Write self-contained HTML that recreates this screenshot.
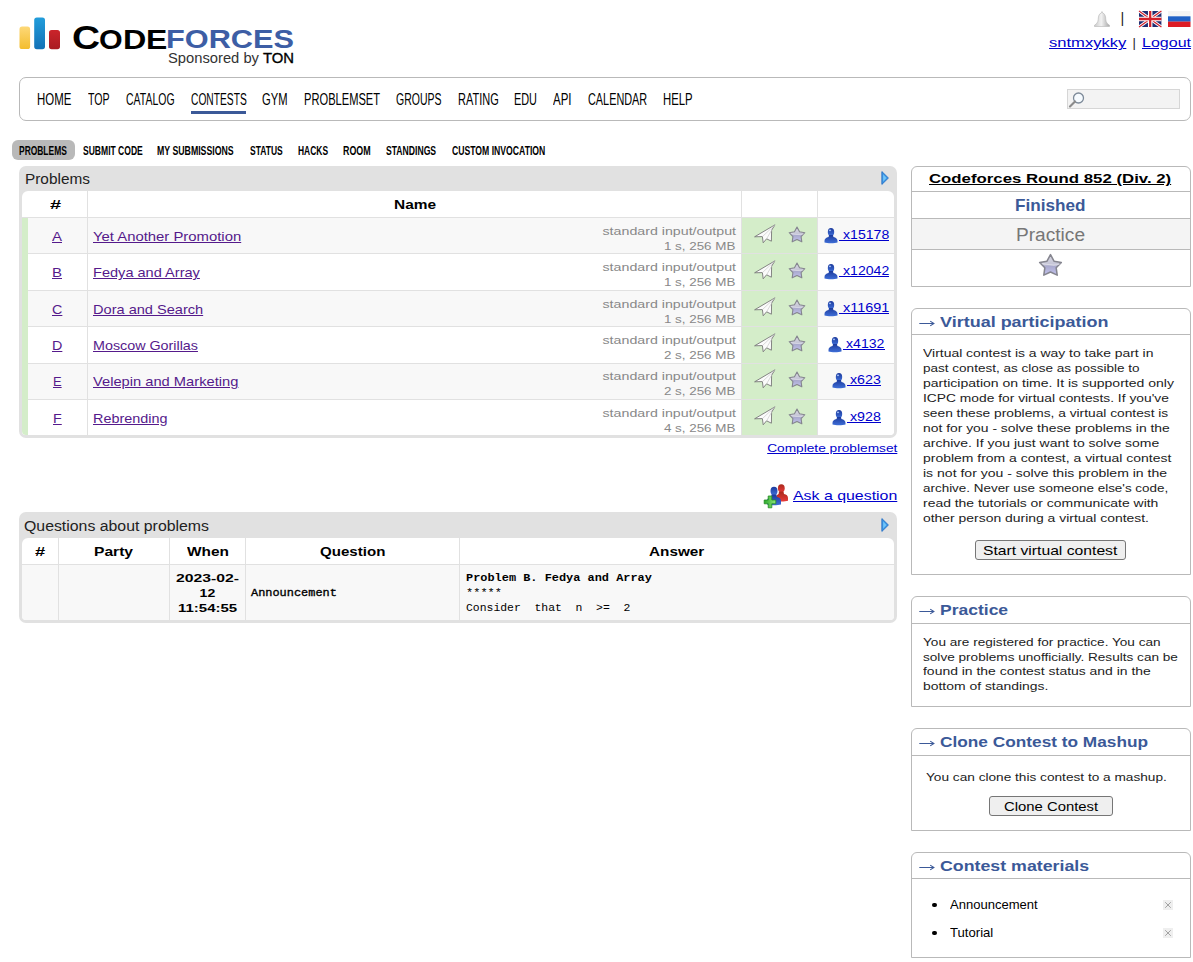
<!DOCTYPE html>
<html><head><meta charset="utf-8">
<style>
*{box-sizing:border-box}
html,body{margin:0;padding:0;background:#fff}
body{position:relative;width:1193px;height:962px;overflow:hidden;font-family:"Liberation Sans",sans-serif;color:#000}
.a{position:absolute;white-space:nowrap}
svg.a{overflow:visible}
</style></head><body>
<svg class="a" style="left:0;top:0" width="70" height="60">
<defs>
<linearGradient id="gy" x1="0" y1="0" x2="0" y2="1"><stop offset="0" stop-color="#fdd878"/><stop offset="1" stop-color="#f3bd2e"/></linearGradient>
<linearGradient id="gb" x1="0" y1="0" x2="0" y2="1"><stop offset="0" stop-color="#229ddb"/><stop offset="1" stop-color="#1371b6"/></linearGradient>
<linearGradient id="gr" x1="0" y1="0" x2="0" y2="1"><stop offset="0" stop-color="#cb242b"/><stop offset="1" stop-color="#a91b21"/></linearGradient>
</defs>
<rect x="19.5" y="26.5" width="10.6" height="22.6" rx="2.6" fill="url(#gy)"/>
<rect x="34.2" y="17.5" width="10.8" height="31.7" rx="2.6" fill="url(#gb)"/>
<rect x="49" y="30" width="11" height="19.2" rx="2.6" fill="url(#gr)"/>
</svg>
<div class="a" style="left:72.18px;top:21.27px;font-family:'Liberation Sans',sans-serif;font-size:32.99px;line-height:32.99px;font-weight:700;color:#000;transform-origin:0 0;transform:scaleX(1.1789);">C</div>
<div class="a" style="left:99.08px;top:25.57px;font-family:'Liberation Sans',sans-serif;font-size:27.91px;line-height:27.91px;font-weight:700;color:#000;transform-origin:0 0;transform:scaleX(1.0890);">O</div>
<div class="a" style="left:122.78px;top:25.57px;font-family:'Liberation Sans',sans-serif;font-size:27.91px;line-height:27.91px;font-weight:700;color:#000;transform-origin:0 0;transform:scaleX(1.1576);">D</div>
<div class="a" style="left:145.88px;top:25.57px;font-family:'Liberation Sans',sans-serif;font-size:27.91px;line-height:27.91px;font-weight:700;color:#000;transform-origin:0 0;transform:scaleX(1.1439);">E</div>
<div class="a" style="left:165.76px;top:27.48px;font-family:'Liberation Sans',sans-serif;font-size:25.9px;line-height:25.9px;font-weight:700;color:#3d5ea5;transform-origin:0 0;transform:scaleX(1.1856);">FORCES</div>
<div class="a" style="left:168.24px;top:51.15px;font-family:'Liberation Sans',sans-serif;font-size:14px;line-height:14px;font-weight:400;color:#333;transform-origin:0 0;transform:scaleX(1.0531);">Sponsored by</div>
<div class="a" style="left:262.72px;top:50.81px;font-family:'Liberation Sans',sans-serif;font-size:14.4px;line-height:14.4px;font-weight:400;color:#000;transform-origin:0 0;transform:scaleX(1.0316);-webkit-text-stroke:0.35px #000;">TON</div>
<svg class="a" style="left:1094px;top:11px" width="16" height="16" viewBox="0 0 16 16">
<defs><linearGradient id="bell" x1="0" y1="0" x2="1" y2="0"><stop offset="0" stop-color="#c9c9c9"/><stop offset="0.45" stop-color="#f2f2f2"/><stop offset="1" stop-color="#a9a9a9"/></linearGradient></defs>
<path d="M8 0.5 L8.6 2 C11 2.6 11.6 5 11.8 8.5 C12 11.5 13.5 13 15.5 14.2 L15.5 15.5 L0.5 15.5 L0.5 14.2 C2.5 13 4 11.5 4.2 8.5 C4.4 5 5 2.6 7.4 2 Z" fill="url(#bell)" stroke="#b5b5b5" stroke-width="0.6"/>
</svg>
<div class="a" style="left:1120.42px;top:11.31px;font-family:'Liberation Sans',sans-serif;font-size:14.4px;line-height:14.4px;font-weight:400;color:#222;">|</div>
<svg class="a" style="left:1138.8px;top:11px" width="22.4" height="16" viewBox="0 0 60 42" preserveAspectRatio="none">
<rect width="60" height="42" fill="#1f2d72"/>
<path d="M0 0 L60 42 M60 0 L0 42" stroke="#fff" stroke-width="8"/>
<path d="M0 0 L60 42 M60 0 L0 42" stroke="#d2202a" stroke-width="3"/>
<path d="M30 0 V42 M0 21 H60" stroke="#fff" stroke-width="12"/>
<path d="M30 0 V42 M0 21 H60" stroke="#d2202a" stroke-width="6"/>
</svg>
<svg class="a" style="left:1167.7px;top:11px" width="22.5" height="16" viewBox="0 0 23 16" preserveAspectRatio="none">
<rect width="23" height="5.4" fill="#f4f4f4"/><rect y="5.3" width="23" height="5.4" fill="#2161c5"/><rect y="10.6" width="23" height="5.4" fill="#dd1c24"/>
</svg>
<div class="a" style="left:1049.48px;top:36.30px;font-family:'Liberation Sans',sans-serif;font-size:13px;line-height:13px;font-weight:400;color:#0000cc;text-decoration:underline;transform-origin:0 0;transform:scaleX(1.2745);">sntmxykky</div>
<div class="a" style="left:1132.48px;top:36.30px;font-family:'Liberation Sans',sans-serif;font-size:13px;line-height:13px;font-weight:400;color:#222;">|</div>
<div class="a" style="left:1142.08px;top:36.30px;font-family:'Liberation Sans',sans-serif;font-size:13px;line-height:13px;font-weight:400;color:#0000cc;text-decoration:underline;transform-origin:0 0;transform:scaleX(1.2319);">Logout</div>
<div class="a" style="left:19px;top:77px;width:1172px;height:44px;border:1px solid #b9b9b9;border-radius:7px"></div>
<div class="a" style="left:36.77px;top:91.83px;font-family:'Liberation Sans',sans-serif;font-size:15.8px;line-height:15.8px;font-weight:400;color:#000;transform-origin:0 0;transform:scaleX(0.7246);">HOME</div>
<div class="a" style="left:87.57px;top:91.83px;font-family:'Liberation Sans',sans-serif;font-size:15.8px;line-height:15.8px;font-weight:400;color:#000;transform-origin:0 0;transform:scaleX(0.6729);">TOP</div>
<div class="a" style="left:126.07px;top:91.83px;font-family:'Liberation Sans',sans-serif;font-size:15.8px;line-height:15.8px;font-weight:400;color:#000;transform-origin:0 0;transform:scaleX(0.6636);">CATALOG</div>
<div class="a" style="left:190.77px;top:91.83px;font-family:'Liberation Sans',sans-serif;font-size:15.8px;line-height:15.8px;font-weight:400;color:#000;transform-origin:0 0;transform:scaleX(0.6477);">CONTESTS</div>
<div class="a" style="left:262.37px;top:91.83px;font-family:'Liberation Sans',sans-serif;font-size:15.8px;line-height:15.8px;font-weight:400;color:#000;transform-origin:0 0;transform:scaleX(0.7091);">GYM</div>
<div class="a" style="left:303.77px;top:91.83px;font-family:'Liberation Sans',sans-serif;font-size:15.8px;line-height:15.8px;font-weight:400;color:#000;transform-origin:0 0;transform:scaleX(0.7048);">PROBLEMSET</div>
<div class="a" style="left:395.77px;top:91.83px;font-family:'Liberation Sans',sans-serif;font-size:15.8px;line-height:15.8px;font-weight:400;color:#000;transform-origin:0 0;transform:scaleX(0.6637);">GROUPS</div>
<div class="a" style="left:457.57px;top:91.83px;font-family:'Liberation Sans',sans-serif;font-size:15.8px;line-height:15.8px;font-weight:400;color:#000;transform-origin:0 0;transform:scaleX(0.6955);">RATING</div>
<div class="a" style="left:513.77px;top:91.83px;font-family:'Liberation Sans',sans-serif;font-size:15.8px;line-height:15.8px;font-weight:400;color:#000;transform-origin:0 0;transform:scaleX(0.6891);">EDU</div>
<div class="a" style="left:553.47px;top:91.83px;font-family:'Liberation Sans',sans-serif;font-size:15.8px;line-height:15.8px;font-weight:400;color:#000;transform-origin:0 0;transform:scaleX(0.7284);">API</div>
<div class="a" style="left:588.27px;top:91.83px;font-family:'Liberation Sans',sans-serif;font-size:15.8px;line-height:15.8px;font-weight:400;color:#000;transform-origin:0 0;transform:scaleX(0.6879);">CALENDAR</div>
<div class="a" style="left:663.07px;top:91.83px;font-family:'Liberation Sans',sans-serif;font-size:15.8px;line-height:15.8px;font-weight:400;color:#000;transform-origin:0 0;transform:scaleX(0.7180);">HELP</div>
<div class="a" style="left:191px;top:111px;width:55px;height:3px;background:#3b5998;"></div>
<div class="a" style="left:1067px;top:89px;width:113px;height:20px;background:#f3f3f3;border:1px solid #d6d6d6"></div>
<svg class="a" style="left:1068px;top:91px" width="18" height="18" viewBox="0 0 18 18">
<circle cx="10.5" cy="7" r="5" fill="#f6fbff" stroke="#7d8a99" stroke-width="1.3"/>
<path d="M7 10.5 L2 15.5" stroke="#8b8b8b" stroke-width="2.2" stroke-linecap="round"/>
</svg>
<div class="a" style="left:12px;top:140px;width:63px;height:20px;background:#b9b9b9;border-radius:6px"></div>
<div class="a" style="left:19.11px;top:144.77px;font-family:'Liberation Sans',sans-serif;font-size:12.2px;line-height:12.2px;font-weight:700;color:#000;transform-origin:0 0;transform:scaleX(0.6920);">PROBLEMS</div>
<div class="a" style="left:82.51px;top:144.77px;font-family:'Liberation Sans',sans-serif;font-size:12.2px;line-height:12.2px;font-weight:700;color:#000;transform-origin:0 0;transform:scaleX(0.7009);">SUBMIT CODE</div>
<div class="a" style="left:157.41px;top:144.77px;font-family:'Liberation Sans',sans-serif;font-size:12.2px;line-height:12.2px;font-weight:700;color:#000;transform-origin:0 0;transform:scaleX(0.7183);">MY SUBMISSIONS</div>
<div class="a" style="left:249.71px;top:144.77px;font-family:'Liberation Sans',sans-serif;font-size:12.2px;line-height:12.2px;font-weight:700;color:#000;transform-origin:0 0;transform:scaleX(0.6970);">STATUS</div>
<div class="a" style="left:297.91px;top:144.77px;font-family:'Liberation Sans',sans-serif;font-size:12.2px;line-height:12.2px;font-weight:700;color:#000;transform-origin:0 0;transform:scaleX(0.6926);">HACKS</div>
<div class="a" style="left:343.21px;top:144.77px;font-family:'Liberation Sans',sans-serif;font-size:12.2px;line-height:12.2px;font-weight:700;color:#000;transform-origin:0 0;transform:scaleX(0.7296);">ROOM</div>
<div class="a" style="left:386.21px;top:144.77px;font-family:'Liberation Sans',sans-serif;font-size:12.2px;line-height:12.2px;font-weight:700;color:#000;transform-origin:0 0;transform:scaleX(0.7071);">STANDINGS</div>
<div class="a" style="left:452.31px;top:144.77px;font-family:'Liberation Sans',sans-serif;font-size:12.2px;line-height:12.2px;font-weight:700;color:#000;transform-origin:0 0;transform:scaleX(0.7088);">CUSTOM INVOCATION</div>
<svg width="0" height="0" style="position:absolute">
<defs>
<linearGradient id="tri" x1="0" y1="0" x2="1" y2="0"><stop offset="0" stop-color="#1b6fd0"/><stop offset="1" stop-color="#6cc3f5"/></linearGradient>
<linearGradient id="star" x1="0" y1="0" x2="0" y2="1"><stop offset="0" stop-color="#d8d8e2"/><stop offset="0.5" stop-color="#c4c4d6"/><stop offset="0.55" stop-color="#a9a9cc"/><stop offset="1" stop-color="#c2c2ee"/></linearGradient>
<linearGradient id="ublue" x1="0" y1="0" x2="0" y2="1"><stop offset="0" stop-color="#1c3a9c"/><stop offset="1" stop-color="#3f6fd8"/></linearGradient>
<linearGradient id="ured" x1="0" y1="0" x2="0" y2="1"><stop offset="0" stop-color="#a8291c"/><stop offset="1" stop-color="#e83a3a"/></linearGradient>
<linearGradient id="ugreen" x1="0" y1="0" x2="1" y2="0"><stop offset="0" stop-color="#2ca82c"/><stop offset="1" stop-color="#8fe87a"/></linearGradient>




</defs></svg>
<div class="a" style="left:19px;top:166px;width:878px;height:272px;background:#e1e1e1;border-radius:7px"></div>
<div class="a" style="left:24.94px;top:171.65px;font-family:'Liberation Sans',sans-serif;font-size:14px;line-height:14px;font-weight:400;color:#222;transform-origin:0 0;transform:scaleX(1.0981);">Problems</div>
<svg class="a" style="left:880.5px;top:170.5px" width="8" height="14" viewBox="0 0 8 14"><path d="M0.9 0.6 L7.4 7 L0.9 13.4 Z" fill="#3d9ae8" stroke="#2a74c8" stroke-width="1" stroke-linejoin="round"/><path d="M2.2 3.5 L5.4 7 L2.2 10.5 Z" fill="#7fd0fb" opacity="0.8"/></svg>
<div class="a" style="left:22px;top:191px;width:872px;height:244px;background:#fff;border-radius:6px 6px 4px 4px;overflow:hidden">
<div class="a" style="left:0px;top:26px;width:872px;height:36px;background:#f8f8f8;"></div>
<div class="a" style="left:0px;top:26px;width:872px;height:1px;background:#e1e1e1;"></div>
<div class="a" style="left:720px;top:27px;width:75px;height:35px;background:#d4edc9;"></div>
<div class="a" style="left:0px;top:62px;width:872px;height:37px;background:#ffffff;"></div>
<div class="a" style="left:0px;top:62px;width:872px;height:1px;background:#e1e1e1;"></div>
<div class="a" style="left:720px;top:63px;width:75px;height:36px;background:#d4edc9;"></div>
<div class="a" style="left:0px;top:99px;width:872px;height:36px;background:#f8f8f8;"></div>
<div class="a" style="left:0px;top:99px;width:872px;height:1px;background:#e1e1e1;"></div>
<div class="a" style="left:720px;top:100px;width:75px;height:35px;background:#d4edc9;"></div>
<div class="a" style="left:0px;top:135px;width:872px;height:37px;background:#ffffff;"></div>
<div class="a" style="left:0px;top:135px;width:872px;height:1px;background:#e1e1e1;"></div>
<div class="a" style="left:720px;top:136px;width:75px;height:36px;background:#d4edc9;"></div>
<div class="a" style="left:0px;top:172px;width:872px;height:36px;background:#f8f8f8;"></div>
<div class="a" style="left:0px;top:172px;width:872px;height:1px;background:#e1e1e1;"></div>
<div class="a" style="left:720px;top:173px;width:75px;height:35px;background:#d4edc9;"></div>
<div class="a" style="left:0px;top:208px;width:872px;height:36px;background:#ffffff;"></div>
<div class="a" style="left:0px;top:208px;width:872px;height:1px;background:#e1e1e1;"></div>
<div class="a" style="left:720px;top:209px;width:75px;height:35px;background:#d4edc9;"></div>
<div class="a" style="left:0px;top:27px;width:6px;height:217px;background:#d4edc9;"></div>
<div class="a" style="left:65px;top:0px;width:1px;height:244px;background:#e1e1e1;"></div>
<div class="a" style="left:719px;top:0px;width:1px;height:244px;background:#e1e1e1;"></div>
<div class="a" style="left:795px;top:0px;width:1px;height:244px;background:#e1e1e1;"></div>
</div>
<div class="a" style="left:50.38px;top:197.60px;font-family:'Liberation Sans',sans-serif;font-size:13px;line-height:13px;font-weight:700;color:#000;transform-origin:0 0;transform:scaleX(1.5347);">#</div>
<div class="a" style="left:393.68px;top:198.00px;font-family:'Liberation Sans',sans-serif;font-size:13px;line-height:13px;font-weight:700;color:#000;transform-origin:0 0;transform:scaleX(1.1872);">Name</div>
<div class="a" style="left:52.48px;top:230.00px;font-family:'Liberation Sans',sans-serif;font-size:13px;line-height:13px;font-weight:400;color:#551a8b;text-decoration:underline;transform-origin:0 0;transform:scaleX(1.1532);">A</div>
<div class="a" style="left:92.78px;top:230.00px;font-family:'Liberation Sans',sans-serif;font-size:13px;line-height:13px;font-weight:400;color:#551a8b;text-decoration:underline;transform-origin:0 0;transform:scaleX(1.1434);">Yet Another Promotion</div>
<div class="a" style="left:627.61px;top:225.87px;font-family:'Liberation Sans',sans-serif;font-size:11.5px;line-height:11.5px;font-weight:400;color:#888;transform-origin:100% 0;transform:scaleX(1.2358);">standard input/output</div>
<div class="a" style="left:674.30px;top:240.97px;font-family:'Liberation Sans',sans-serif;font-size:11.5px;line-height:11.5px;font-weight:400;color:#888;transform-origin:100% 0;transform:scaleX(1.1647);">1 s, 256 MB</div>
<svg class="a" style="left:754px;top:224.00px" width="22" height="20" viewBox="0 0 22 20"><path d="M21 0.8 L0.6 12.8 L8.4 12.6 L9.2 18.8 L12.6 14.8 L17.4 17.2 L17.6 6.2 Z" fill="#fbfbfb" stroke="#777" stroke-width="0.9" stroke-linejoin="round"/><path d="M21 0.8 L8.4 12.6 M17.6 6.2 L12.6 14.8" stroke="#c9c9c9" stroke-width="0.7"/></svg>
<svg class="a" style="left:788px;top:226.00px" width="18" height="17" viewBox="0 0 18 17"><path d="M9.00 1.00 L11.53 5.72 L16.80 6.67 L13.09 10.53 L13.82 15.83 L9.00 13.50 L4.18 15.83 L4.91 10.53 L1.20 6.67 L6.47 5.72 Z" fill="url(#star)" stroke="#85858f" stroke-width="1.1" stroke-linejoin="round"/><path d="M3 7.5 C7 8 11 9.5 15.5 8" stroke="#e6e6ee" stroke-width="0.8" fill="none" opacity="0.7"/></svg>
<svg class="a" style="left:824px;top:228.00px" width="14" height="16" viewBox="0 0 14 16"><ellipse cx="7" cy="4" rx="3.2" ry="4" fill="url(#ublue)"/><path d="M5 7 L9 7 L9.4 9 C12 9.6 13.5 10.8 13.5 13 L13.5 14.6 C11 15.6 3 15.6 0.5 14.6 L0.5 13 C0.5 10.8 2 9.6 4.6 9 Z" fill="url(#ublue)"/><ellipse cx="6" cy="2.3" rx="1.2" ry="0.9" fill="#9ab8f0"/></svg>
<div class="a" style="left:839px;top:240px;width:50px;height:1px;background:#0000cc;"></div>
<div class="a" style="left:842.78px;top:227.80px;font-family:'Liberation Sans',sans-serif;font-size:13px;line-height:13px;font-weight:400;color:#0000cc;transform-origin:0 0;transform:scaleX(1.0839);">x15178</div>
<div class="a" style="left:52.48px;top:266.36px;font-family:'Liberation Sans',sans-serif;font-size:13px;line-height:13px;font-weight:400;color:#551a8b;text-decoration:underline;transform-origin:0 0;transform:scaleX(1.1532);">B</div>
<div class="a" style="left:92.78px;top:266.36px;font-family:'Liberation Sans',sans-serif;font-size:13px;line-height:13px;font-weight:400;color:#551a8b;text-decoration:underline;transform-origin:0 0;transform:scaleX(1.1203);">Fedya and Array</div>
<div class="a" style="left:627.61px;top:262.23px;font-family:'Liberation Sans',sans-serif;font-size:11.5px;line-height:11.5px;font-weight:400;color:#888;transform-origin:100% 0;transform:scaleX(1.2358);">standard input/output</div>
<div class="a" style="left:674.30px;top:277.33px;font-family:'Liberation Sans',sans-serif;font-size:11.5px;line-height:11.5px;font-weight:400;color:#888;transform-origin:100% 0;transform:scaleX(1.1647);">1 s, 256 MB</div>
<svg class="a" style="left:754px;top:260.36px" width="22" height="20" viewBox="0 0 22 20"><path d="M21 0.8 L0.6 12.8 L8.4 12.6 L9.2 18.8 L12.6 14.8 L17.4 17.2 L17.6 6.2 Z" fill="#fbfbfb" stroke="#777" stroke-width="0.9" stroke-linejoin="round"/><path d="M21 0.8 L8.4 12.6 M17.6 6.2 L12.6 14.8" stroke="#c9c9c9" stroke-width="0.7"/></svg>
<svg class="a" style="left:788px;top:262.36px" width="18" height="17" viewBox="0 0 18 17"><path d="M9.00 1.00 L11.53 5.72 L16.80 6.67 L13.09 10.53 L13.82 15.83 L9.00 13.50 L4.18 15.83 L4.91 10.53 L1.20 6.67 L6.47 5.72 Z" fill="url(#star)" stroke="#85858f" stroke-width="1.1" stroke-linejoin="round"/><path d="M3 7.5 C7 8 11 9.5 15.5 8" stroke="#e6e6ee" stroke-width="0.8" fill="none" opacity="0.7"/></svg>
<svg class="a" style="left:824px;top:264.36px" width="14" height="16" viewBox="0 0 14 16"><ellipse cx="7" cy="4" rx="3.2" ry="4" fill="url(#ublue)"/><path d="M5 7 L9 7 L9.4 9 C12 9.6 13.5 10.8 13.5 13 L13.5 14.6 C11 15.6 3 15.6 0.5 14.6 L0.5 13 C0.5 10.8 2 9.6 4.6 9 Z" fill="url(#ublue)"/><ellipse cx="6" cy="2.3" rx="1.2" ry="0.9" fill="#9ab8f0"/></svg>
<div class="a" style="left:839px;top:276px;width:50px;height:1px;background:#0000cc;"></div>
<div class="a" style="left:842.78px;top:264.16px;font-family:'Liberation Sans',sans-serif;font-size:13px;line-height:13px;font-weight:400;color:#0000cc;transform-origin:0 0;transform:scaleX(1.0839);">x12042</div>
<div class="a" style="left:52.08px;top:302.72px;font-family:'Liberation Sans',sans-serif;font-size:13px;line-height:13px;font-weight:400;color:#551a8b;text-decoration:underline;transform-origin:0 0;transform:scaleX(1.1020);">C</div>
<div class="a" style="left:92.78px;top:302.72px;font-family:'Liberation Sans',sans-serif;font-size:13px;line-height:13px;font-weight:400;color:#551a8b;text-decoration:underline;transform-origin:0 0;transform:scaleX(1.1209);">Dora and Search</div>
<div class="a" style="left:627.61px;top:298.59px;font-family:'Liberation Sans',sans-serif;font-size:11.5px;line-height:11.5px;font-weight:400;color:#888;transform-origin:100% 0;transform:scaleX(1.2358);">standard input/output</div>
<div class="a" style="left:674.30px;top:313.69px;font-family:'Liberation Sans',sans-serif;font-size:11.5px;line-height:11.5px;font-weight:400;color:#888;transform-origin:100% 0;transform:scaleX(1.1647);">1 s, 256 MB</div>
<svg class="a" style="left:754px;top:296.72px" width="22" height="20" viewBox="0 0 22 20"><path d="M21 0.8 L0.6 12.8 L8.4 12.6 L9.2 18.8 L12.6 14.8 L17.4 17.2 L17.6 6.2 Z" fill="#fbfbfb" stroke="#777" stroke-width="0.9" stroke-linejoin="round"/><path d="M21 0.8 L8.4 12.6 M17.6 6.2 L12.6 14.8" stroke="#c9c9c9" stroke-width="0.7"/></svg>
<svg class="a" style="left:788px;top:298.72px" width="18" height="17" viewBox="0 0 18 17"><path d="M9.00 1.00 L11.53 5.72 L16.80 6.67 L13.09 10.53 L13.82 15.83 L9.00 13.50 L4.18 15.83 L4.91 10.53 L1.20 6.67 L6.47 5.72 Z" fill="url(#star)" stroke="#85858f" stroke-width="1.1" stroke-linejoin="round"/><path d="M3 7.5 C7 8 11 9.5 15.5 8" stroke="#e6e6ee" stroke-width="0.8" fill="none" opacity="0.7"/></svg>
<svg class="a" style="left:824px;top:300.72px" width="14" height="16" viewBox="0 0 14 16"><ellipse cx="7" cy="4" rx="3.2" ry="4" fill="url(#ublue)"/><path d="M5 7 L9 7 L9.4 9 C12 9.6 13.5 10.8 13.5 13 L13.5 14.6 C11 15.6 3 15.6 0.5 14.6 L0.5 13 C0.5 10.8 2 9.6 4.6 9 Z" fill="url(#ublue)"/><ellipse cx="6" cy="2.3" rx="1.2" ry="0.9" fill="#9ab8f0"/></svg>
<div class="a" style="left:839px;top:313px;width:50px;height:1px;background:#0000cc;"></div>
<div class="a" style="left:842.78px;top:300.52px;font-family:'Liberation Sans',sans-serif;font-size:13px;line-height:13px;font-weight:400;color:#0000cc;transform-origin:0 0;transform:scaleX(1.1096);">x11691</div>
<div class="a" style="left:52.08px;top:339.08px;font-family:'Liberation Sans',sans-serif;font-size:13px;line-height:13px;font-weight:400;color:#551a8b;text-decoration:underline;transform-origin:0 0;transform:scaleX(1.1020);">D</div>
<div class="a" style="left:92.78px;top:339.08px;font-family:'Liberation Sans',sans-serif;font-size:13px;line-height:13px;font-weight:400;color:#551a8b;text-decoration:underline;transform-origin:0 0;transform:scaleX(1.1006);">Moscow Gorillas</div>
<div class="a" style="left:627.61px;top:334.95px;font-family:'Liberation Sans',sans-serif;font-size:11.5px;line-height:11.5px;font-weight:400;color:#888;transform-origin:100% 0;transform:scaleX(1.2358);">standard input/output</div>
<div class="a" style="left:674.30px;top:350.05px;font-family:'Liberation Sans',sans-serif;font-size:11.5px;line-height:11.5px;font-weight:400;color:#888;transform-origin:100% 0;transform:scaleX(1.1647);">2 s, 256 MB</div>
<svg class="a" style="left:754px;top:333.08px" width="22" height="20" viewBox="0 0 22 20"><path d="M21 0.8 L0.6 12.8 L8.4 12.6 L9.2 18.8 L12.6 14.8 L17.4 17.2 L17.6 6.2 Z" fill="#fbfbfb" stroke="#777" stroke-width="0.9" stroke-linejoin="round"/><path d="M21 0.8 L8.4 12.6 M17.6 6.2 L12.6 14.8" stroke="#c9c9c9" stroke-width="0.7"/></svg>
<svg class="a" style="left:788px;top:335.08px" width="18" height="17" viewBox="0 0 18 17"><path d="M9.00 1.00 L11.53 5.72 L16.80 6.67 L13.09 10.53 L13.82 15.83 L9.00 13.50 L4.18 15.83 L4.91 10.53 L1.20 6.67 L6.47 5.72 Z" fill="url(#star)" stroke="#85858f" stroke-width="1.1" stroke-linejoin="round"/><path d="M3 7.5 C7 8 11 9.5 15.5 8" stroke="#e6e6ee" stroke-width="0.8" fill="none" opacity="0.7"/></svg>
<svg class="a" style="left:828px;top:337.08px" width="14" height="16" viewBox="0 0 14 16"><ellipse cx="7" cy="4" rx="3.2" ry="4" fill="url(#ublue)"/><path d="M5 7 L9 7 L9.4 9 C12 9.6 13.5 10.8 13.5 13 L13.5 14.6 C11 15.6 3 15.6 0.5 14.6 L0.5 13 C0.5 10.8 2 9.6 4.6 9 Z" fill="url(#ublue)"/><ellipse cx="6" cy="2.3" rx="1.2" ry="0.9" fill="#9ab8f0"/></svg>
<div class="a" style="left:843px;top:349px;width:42px;height:1px;background:#0000cc;"></div>
<div class="a" style="left:846.48px;top:336.88px;font-family:'Liberation Sans',sans-serif;font-size:13px;line-height:13px;font-weight:400;color:#0000cc;transform-origin:0 0;transform:scaleX(1.0849);">x4132</div>
<div class="a" style="left:52.78px;top:375.44px;font-family:'Liberation Sans',sans-serif;font-size:13px;line-height:13px;font-weight:400;color:#551a8b;text-decoration:underline;transform-origin:0 0;transform:scaleX(0.9959);">E</div>
<div class="a" style="left:92.78px;top:375.44px;font-family:'Liberation Sans',sans-serif;font-size:13px;line-height:13px;font-weight:400;color:#551a8b;text-decoration:underline;transform-origin:0 0;transform:scaleX(1.1301);">Velepin and Marketing</div>
<div class="a" style="left:627.61px;top:371.31px;font-family:'Liberation Sans',sans-serif;font-size:11.5px;line-height:11.5px;font-weight:400;color:#888;transform-origin:100% 0;transform:scaleX(1.2358);">standard input/output</div>
<div class="a" style="left:674.30px;top:386.41px;font-family:'Liberation Sans',sans-serif;font-size:11.5px;line-height:11.5px;font-weight:400;color:#888;transform-origin:100% 0;transform:scaleX(1.1647);">2 s, 256 MB</div>
<svg class="a" style="left:754px;top:369.44px" width="22" height="20" viewBox="0 0 22 20"><path d="M21 0.8 L0.6 12.8 L8.4 12.6 L9.2 18.8 L12.6 14.8 L17.4 17.2 L17.6 6.2 Z" fill="#fbfbfb" stroke="#777" stroke-width="0.9" stroke-linejoin="round"/><path d="M21 0.8 L8.4 12.6 M17.6 6.2 L12.6 14.8" stroke="#c9c9c9" stroke-width="0.7"/></svg>
<svg class="a" style="left:788px;top:371.44px" width="18" height="17" viewBox="0 0 18 17"><path d="M9.00 1.00 L11.53 5.72 L16.80 6.67 L13.09 10.53 L13.82 15.83 L9.00 13.50 L4.18 15.83 L4.91 10.53 L1.20 6.67 L6.47 5.72 Z" fill="url(#star)" stroke="#85858f" stroke-width="1.1" stroke-linejoin="round"/><path d="M3 7.5 C7 8 11 9.5 15.5 8" stroke="#e6e6ee" stroke-width="0.8" fill="none" opacity="0.7"/></svg>
<svg class="a" style="left:832.3px;top:373.44px" width="14" height="16" viewBox="0 0 14 16"><ellipse cx="7" cy="4" rx="3.2" ry="4" fill="url(#ublue)"/><path d="M5 7 L9 7 L9.4 9 C12 9.6 13.5 10.8 13.5 13 L13.5 14.6 C11 15.6 3 15.6 0.5 14.6 L0.5 13 C0.5 10.8 2 9.6 4.6 9 Z" fill="url(#ublue)"/><ellipse cx="6" cy="2.3" rx="1.2" ry="0.9" fill="#9ab8f0"/></svg>
<div class="a" style="left:847.3px;top:385px;width:33.700000000000045px;height:1px;background:#0000cc;"></div>
<div class="a" style="left:850.48px;top:373.24px;font-family:'Liberation Sans',sans-serif;font-size:13px;line-height:13px;font-weight:400;color:#0000cc;transform-origin:0 0;transform:scaleX(1.0939);">x623</div>
<div class="a" style="left:52.78px;top:411.80px;font-family:'Liberation Sans',sans-serif;font-size:13px;line-height:13px;font-weight:400;color:#551a8b;text-decoration:underline;transform-origin:0 0;transform:scaleX(1.1013);">F</div>
<div class="a" style="left:92.78px;top:411.80px;font-family:'Liberation Sans',sans-serif;font-size:13px;line-height:13px;font-weight:400;color:#551a8b;text-decoration:underline;transform-origin:0 0;transform:scaleX(1.1077);">Rebrending</div>
<div class="a" style="left:627.61px;top:407.67px;font-family:'Liberation Sans',sans-serif;font-size:11.5px;line-height:11.5px;font-weight:400;color:#888;transform-origin:100% 0;transform:scaleX(1.2358);">standard input/output</div>
<div class="a" style="left:674.30px;top:422.77px;font-family:'Liberation Sans',sans-serif;font-size:11.5px;line-height:11.5px;font-weight:400;color:#888;transform-origin:100% 0;transform:scaleX(1.1647);">4 s, 256 MB</div>
<svg class="a" style="left:754px;top:405.80px" width="22" height="20" viewBox="0 0 22 20"><path d="M21 0.8 L0.6 12.8 L8.4 12.6 L9.2 18.8 L12.6 14.8 L17.4 17.2 L17.6 6.2 Z" fill="#fbfbfb" stroke="#777" stroke-width="0.9" stroke-linejoin="round"/><path d="M21 0.8 L8.4 12.6 M17.6 6.2 L12.6 14.8" stroke="#c9c9c9" stroke-width="0.7"/></svg>
<svg class="a" style="left:788px;top:407.80px" width="18" height="17" viewBox="0 0 18 17"><path d="M9.00 1.00 L11.53 5.72 L16.80 6.67 L13.09 10.53 L13.82 15.83 L9.00 13.50 L4.18 15.83 L4.91 10.53 L1.20 6.67 L6.47 5.72 Z" fill="url(#star)" stroke="#85858f" stroke-width="1.1" stroke-linejoin="round"/><path d="M3 7.5 C7 8 11 9.5 15.5 8" stroke="#e6e6ee" stroke-width="0.8" fill="none" opacity="0.7"/></svg>
<svg class="a" style="left:832.3px;top:409.80px" width="14" height="16" viewBox="0 0 14 16"><ellipse cx="7" cy="4" rx="3.2" ry="4" fill="url(#ublue)"/><path d="M5 7 L9 7 L9.4 9 C12 9.6 13.5 10.8 13.5 13 L13.5 14.6 C11 15.6 3 15.6 0.5 14.6 L0.5 13 C0.5 10.8 2 9.6 4.6 9 Z" fill="url(#ublue)"/><ellipse cx="6" cy="2.3" rx="1.2" ry="0.9" fill="#9ab8f0"/></svg>
<div class="a" style="left:847.3px;top:422px;width:33.700000000000045px;height:1px;background:#0000cc;"></div>
<div class="a" style="left:850.48px;top:409.60px;font-family:'Liberation Sans',sans-serif;font-size:13px;line-height:13px;font-weight:400;color:#0000cc;transform-origin:0 0;transform:scaleX(1.0939);">x928</div>
<div class="a" style="left:787.66px;top:443.47px;font-family:'Liberation Sans',sans-serif;font-size:11.5px;line-height:11.5px;font-weight:400;color:#0000cc;text-decoration:underline;transform-origin:100% 0;transform:scaleX(1.1902);">Complete problemset</div>
<svg class="a" style="left:763px;top:483px" width="26" height="26" viewBox="0 0 26 26">
<ellipse cx="18.3" cy="5.2" rx="3.4" ry="4" fill="url(#ured)"/>
<path d="M16 8.5 L20.5 8.5 L21 11 C23.5 11.5 25 12.6 25 15 L25 17.8 C22 18.8 15.5 18.8 13 17.8 L13 15 C13 12.6 14.5 11.5 15.6 11 Z" fill="url(#ured)"/>
<ellipse cx="11" cy="8" rx="3.5" ry="4.2" fill="url(#ublue)"/>
<path d="M8.6 11.5 L13.4 11.5 L14 14 C16.5 14.5 18 15.8 18 18 L18 21.5 C15 22.6 7 22.6 4 21.5 L4 18 C4 15.8 5.5 14.5 8 14 Z" fill="url(#ublue)"/>
<path d="M5.2 13 H8.8 V17 H12.8 V20.8 H8.8 V24.8 H5.2 V20.8 H1.2 V17 H5.2 Z" fill="url(#ugreen)" stroke="#1f8a1f" stroke-width="0.8"/>
</svg>
<div class="a" style="left:811.75px;top:488.80px;font-family:'Liberation Sans',sans-serif;font-size:13px;line-height:13px;font-weight:400;color:#0000cc;text-decoration:underline;transform-origin:100% 0;transform:scaleX(1.2228);">Ask a question</div>
<div class="a" style="left:19px;top:512px;width:878px;height:111px;background:#e1e1e1;border-radius:7px"></div>
<div class="a" style="left:23.94px;top:519.05px;font-family:'Liberation Sans',sans-serif;font-size:14px;line-height:14px;font-weight:400;color:#222;transform-origin:0 0;transform:scaleX(1.1318);">Questions about problems</div>
<svg class="a" style="left:880.5px;top:517.8px" width="8" height="14" viewBox="0 0 8 14"><path d="M0.9 0.6 L7.4 7 L0.9 13.4 Z" fill="#3d9ae8" stroke="#2a74c8" stroke-width="1" stroke-linejoin="round"/><path d="M2.2 3.5 L5.4 7 L2.2 10.5 Z" fill="#7fd0fb" opacity="0.8"/></svg>
<div class="a" style="left:22px;top:538px;width:872px;height:82px;background:#fff;border-radius:6px 6px 4px 4px;overflow:hidden">
<div class="a" style="left:0px;top:26px;width:872px;height:56px;background:#f8f8f8;"></div>
<div class="a" style="left:0px;top:26px;width:872px;height:1px;background:#e1e1e1;"></div>
<div class="a" style="left:36px;top:0px;width:1px;height:82px;background:#e1e1e1;"></div>
<div class="a" style="left:147px;top:0px;width:1px;height:82px;background:#e1e1e1;"></div>
<div class="a" style="left:223px;top:0px;width:1px;height:82px;background:#e1e1e1;"></div>
<div class="a" style="left:437px;top:0px;width:1px;height:82px;background:#e1e1e1;"></div>
</div>
<div class="a" style="left:35.28px;top:545.20px;font-family:'Liberation Sans',sans-serif;font-size:13px;line-height:13px;font-weight:700;color:#000;transform-origin:0 0;transform:scaleX(1.4055);">#</div>
<div class="a" style="left:94.48px;top:545.20px;font-family:'Liberation Sans',sans-serif;font-size:13px;line-height:13px;font-weight:700;color:#000;transform-origin:0 0;transform:scaleX(1.2008);">Party</div>
<div class="a" style="left:186.98px;top:545.20px;font-family:'Liberation Sans',sans-serif;font-size:13px;line-height:13px;font-weight:700;color:#000;transform-origin:0 0;transform:scaleX(1.1851);">When</div>
<div class="a" style="left:320.08px;top:545.20px;font-family:'Liberation Sans',sans-serif;font-size:13px;line-height:13px;font-weight:700;color:#000;transform-origin:0 0;transform:scaleX(1.1610);">Question</div>
<div class="a" style="left:649.48px;top:545.20px;font-family:'Liberation Sans',sans-serif;font-size:13px;line-height:13px;font-weight:700;color:#000;transform-origin:0 0;transform:scaleX(1.1760);">Answer</div>
<div class="a" style="left:176.34px;top:573.27px;font-family:'Liberation Sans',sans-serif;font-size:11.5px;line-height:11.5px;font-weight:700;color:#000;transform-origin:0 0;transform:scaleX(1.3676);">2023-02-</div>
<div class="a" style="left:201.10px;top:588.27px;font-family:'Liberation Sans',sans-serif;font-size:11.5px;line-height:11.5px;font-weight:700;color:#000;transform-origin:50% 0;transform:scaleX(1.2214);">12</div>
<div class="a" style="left:177.54px;top:603.27px;font-family:'Liberation Sans',sans-serif;font-size:11.5px;line-height:11.5px;font-weight:700;color:#000;transform-origin:0 0;transform:scaleX(1.3040);">11:54:55</div>
<div class="a" style="left:251.33px;top:588.46px;font-family:'Liberation Mono',monospace;font-size:11.8px;line-height:11.8px;font-weight:400;color:#000;transform-origin:0 0;transform:scaleX(1.0104);-webkit-text-stroke:0.35px #000;">Announcement</div>
<div class="a" style="left:465.53px;top:572.76px;font-family:'Liberation Mono',monospace;font-size:11.8px;line-height:11.8px;font-weight:700;color:#000;transform-origin:0 0;transform:scaleX(1.0100);">Problem B. Fedya and Array</div>
<div class="a" style="left:465.53px;top:587.96px;font-family:'Liberation Mono',monospace;font-size:11.8px;line-height:11.8px;font-weight:400;color:#000;transform-origin:0 0;transform:scaleX(1.0156);">*****</div>
<div class="a" style="left:465.53px;top:602.66px;font-family:'Liberation Mono',monospace;font-size:11.8px;line-height:11.8px;font-weight:400;color:#000;transform-origin:0 0;transform:scaleX(0.9668);white-space:pre;">Consider  that  n  &gt;=  2</div>
<div class="a" style="left:911px;top:166px;width:280px;height:121px;border:1px solid #b9b9b9;border-radius:6px 6px 0 0;background:#fff"></div>
<div class="a" style="left:912px;top:191px;width:278px;height:1px;background:#b9b9b9;"></div>
<div class="a" style="left:912px;top:219px;width:278px;height:30px;background:#f4f4f4;"></div>
<div class="a" style="left:912px;top:218px;width:278px;height:1px;background:#b9b9b9;"></div>
<div class="a" style="left:912px;top:249px;width:278px;height:1px;background:#b9b9b9;"></div>
<div class="a" style="left:928.96px;top:172.37px;font-family:'Liberation Sans',sans-serif;font-size:13.5px;line-height:13.5px;font-weight:700;color:#000;text-decoration:underline;transform-origin:0 0;transform:scaleX(1.2431);">Codeforces Round 852 (Div. 2)</div>
<div class="a" style="left:1015.44px;top:197.13px;font-family:'Liberation Sans',sans-serif;font-size:16.5px;line-height:16.5px;font-weight:700;color:#3b5998;transform-origin:0 0;transform:scaleX(1.0388);">Finished</div>
<div class="a" style="left:1016.48px;top:225.66px;font-family:'Liberation Sans',sans-serif;font-size:18px;line-height:18px;font-weight:400;color:#777;transform-origin:0 0;transform:scaleX(1.0616);">Practice</div>
<svg class="a" style="left:1038px;top:253px" width="25" height="24" viewBox="0 0 18 17"><path d="M9.00 1.00 L11.53 5.72 L16.80 6.67 L13.09 10.53 L13.82 15.83 L9.00 13.50 L4.18 15.83 L4.91 10.53 L1.20 6.67 L6.47 5.72 Z" fill="url(#star)" stroke="#85858f" stroke-width="1.1" stroke-linejoin="round"/><path d="M3 7.5 C7 8 11 9.5 15.5 8" stroke="#e6e6ee" stroke-width="0.8" fill="none" opacity="0.7"/></svg>
<div class="a" style="left:911px;top:308px;width:280px;height:267px;border:1px solid #b9b9b9;border-radius:6px 6px 0 0;background:#fff"></div>
<div class="a" style="left:912px;top:334px;width:278px;height:1px;background:#b9b9b9;"></div>
<svg class="a" style="left:915px;top:319px" width="24" height="10" viewBox="0 0 24 10"><path d="M4.3 4.5 H18.6 M15.2 2.1 L18.9 4.5 L15.2 6.9" fill="none" stroke="#3b5998" stroke-width="1.1"/></svg>
<div class="a" style="left:939.68px;top:313.88px;font-family:'Liberation Sans',sans-serif;font-size:15.5px;line-height:15.5px;font-weight:700;color:#3b5998;transform-origin:0 0;transform:scaleX(1.1602);">Virtual participation</div>
<div class="a" style="left:923.03px;top:347.81px;font-family:'Liberation Sans',sans-serif;font-size:11.8px;line-height:11.8px;font-weight:400;color:#222;transform-origin:0 0;transform:scaleX(1.1807);">Virtual contest is a way to take part in</div>
<div class="a" style="left:923.03px;top:362.81px;font-family:'Liberation Sans',sans-serif;font-size:11.8px;line-height:11.8px;font-weight:400;color:#222;transform-origin:0 0;transform:scaleX(1.1465);">past contest, as close as possible to</div>
<div class="a" style="left:923.03px;top:377.81px;font-family:'Liberation Sans',sans-serif;font-size:11.8px;line-height:11.8px;font-weight:400;color:#222;transform-origin:0 0;transform:scaleX(1.1885);">participation on time. It is supported only</div>
<div class="a" style="left:923.03px;top:392.81px;font-family:'Liberation Sans',sans-serif;font-size:11.8px;line-height:11.8px;font-weight:400;color:#222;transform-origin:0 0;transform:scaleX(1.1702);">ICPC mode for virtual contests. If you've</div>
<div class="a" style="left:923.03px;top:407.81px;font-family:'Liberation Sans',sans-serif;font-size:11.8px;line-height:11.8px;font-weight:400;color:#222;transform-origin:0 0;transform:scaleX(1.1651);">seen these problems, a virtual contest is</div>
<div class="a" style="left:923.03px;top:422.81px;font-family:'Liberation Sans',sans-serif;font-size:11.8px;line-height:11.8px;font-weight:400;color:#222;transform-origin:0 0;transform:scaleX(1.1759);">not for you - solve these problems in the</div>
<div class="a" style="left:923.03px;top:437.81px;font-family:'Liberation Sans',sans-serif;font-size:11.8px;line-height:11.8px;font-weight:400;color:#222;transform-origin:0 0;transform:scaleX(1.1853);">archive. If you just want to solve some</div>
<div class="a" style="left:923.03px;top:452.81px;font-family:'Liberation Sans',sans-serif;font-size:11.8px;line-height:11.8px;font-weight:400;color:#222;transform-origin:0 0;transform:scaleX(1.1832);">problem from a contest, a virtual contest</div>
<div class="a" style="left:923.03px;top:467.81px;font-family:'Liberation Sans',sans-serif;font-size:11.8px;line-height:11.8px;font-weight:400;color:#222;transform-origin:0 0;transform:scaleX(1.1892);">is not for you - solve this problem in the</div>
<div class="a" style="left:923.03px;top:482.81px;font-family:'Liberation Sans',sans-serif;font-size:11.8px;line-height:11.8px;font-weight:400;color:#222;transform-origin:0 0;transform:scaleX(1.1386);">archive. Never use someone else's code,</div>
<div class="a" style="left:923.03px;top:497.81px;font-family:'Liberation Sans',sans-serif;font-size:11.8px;line-height:11.8px;font-weight:400;color:#222;transform-origin:0 0;transform:scaleX(1.1807);">read the tutorials or communicate with</div>
<div class="a" style="left:923.03px;top:512.81px;font-family:'Liberation Sans',sans-serif;font-size:11.8px;line-height:11.8px;font-weight:400;color:#222;transform-origin:0 0;transform:scaleX(1.1800);">other person during a virtual contest.</div>
<div class="a" style="left:975px;top:540px;width:151px;height:20px;background:#efefef;border:1px solid #767676;border-radius:3px"></div>
<div class="a" style="left:983.31px;top:545.17px;font-family:'Liberation Sans',sans-serif;font-size:12.2px;line-height:12.2px;font-weight:400;color:#000;transform-origin:0 0;transform:scaleX(1.2876);">Start virtual contest</div>
<div class="a" style="left:911px;top:596px;width:280px;height:111px;border:1px solid #b9b9b9;border-radius:6px 6px 0 0;background:#fff"></div>
<div class="a" style="left:912px;top:623px;width:278px;height:1px;background:#b9b9b9;"></div>
<svg class="a" style="left:915px;top:607px" width="24" height="10" viewBox="0 0 24 10"><path d="M4.3 4.5 H18.6 M15.2 2.1 L18.9 4.5 L15.2 6.9" fill="none" stroke="#3b5998" stroke-width="1.1"/></svg>
<div class="a" style="left:939.68px;top:601.58px;font-family:'Liberation Sans',sans-serif;font-size:15.5px;line-height:15.5px;font-weight:700;color:#3b5998;transform-origin:0 0;transform:scaleX(1.1290);">Practice</div>
<div class="a" style="left:922.93px;top:636.71px;font-family:'Liberation Sans',sans-serif;font-size:11.8px;line-height:11.8px;font-weight:400;color:#222;transform-origin:0 0;transform:scaleX(1.1527);">You are registered for practice. You can</div>
<div class="a" style="left:922.93px;top:651.51px;font-family:'Liberation Sans',sans-serif;font-size:11.8px;line-height:11.8px;font-weight:400;color:#222;transform-origin:0 0;transform:scaleX(1.1525);">solve problems unofficially. Results can be</div>
<div class="a" style="left:922.93px;top:666.31px;font-family:'Liberation Sans',sans-serif;font-size:11.8px;line-height:11.8px;font-weight:400;color:#222;transform-origin:0 0;transform:scaleX(1.1817);">found in the contest status and in the</div>
<div class="a" style="left:922.93px;top:681.11px;font-family:'Liberation Sans',sans-serif;font-size:11.8px;line-height:11.8px;font-weight:400;color:#222;transform-origin:0 0;transform:scaleX(1.1802);">bottom of standings.</div>
<div class="a" style="left:911px;top:728px;width:280px;height:103px;border:1px solid #b9b9b9;border-radius:6px 6px 0 0;background:#fff"></div>
<div class="a" style="left:912px;top:755px;width:278px;height:1px;background:#b9b9b9;"></div>
<svg class="a" style="left:915px;top:739px" width="24" height="10" viewBox="0 0 24 10"><path d="M4.3 4.5 H18.6 M15.2 2.1 L18.9 4.5 L15.2 6.9" fill="none" stroke="#3b5998" stroke-width="1.1"/></svg>
<div class="a" style="left:939.68px;top:734.18px;font-family:'Liberation Sans',sans-serif;font-size:15.5px;line-height:15.5px;font-weight:700;color:#3b5998;transform-origin:0 0;transform:scaleX(1.1136);">Clone Contest to Mashup</div>
<div class="a" style="left:925.53px;top:772.01px;font-family:'Liberation Sans',sans-serif;font-size:11.8px;line-height:11.8px;font-weight:400;color:#222;transform-origin:0 0;transform:scaleX(1.1572);">You can clone this contest to a mashup.</div>
<div class="a" style="left:989px;top:796px;width:124px;height:20px;background:#efefef;border:1px solid #767676;border-radius:3px"></div>
<div class="a" style="left:1003.51px;top:801.47px;font-family:'Liberation Sans',sans-serif;font-size:12.2px;line-height:12.2px;font-weight:400;color:#000;transform-origin:0 0;transform:scaleX(1.2183);">Clone Contest</div>
<div class="a" style="left:911px;top:852px;width:280px;height:106px;border:1px solid #b9b9b9;border-radius:6px 6px 0 0;background:#fff"></div>
<div class="a" style="left:912px;top:878px;width:278px;height:1px;background:#b9b9b9;"></div>
<svg class="a" style="left:915px;top:863px" width="24" height="10" viewBox="0 0 24 10"><path d="M4.3 4.5 H18.6 M15.2 2.1 L18.9 4.5 L15.2 6.9" fill="none" stroke="#3b5998" stroke-width="1.1"/></svg>
<div class="a" style="left:939.68px;top:858.08px;font-family:'Liberation Sans',sans-serif;font-size:15.5px;line-height:15.5px;font-weight:700;color:#3b5998;transform-origin:0 0;transform:scaleX(1.1465);">Contest materials</div>
<div class="a" style="left:932px;top:902.5px;width:4.5px;height:4.5px;border-radius:50%;background:#000"></div>
<div class="a" style="left:932px;top:930.5px;width:4.5px;height:4.5px;border-radius:50%;background:#000"></div>
<div class="a" style="left:949.86px;top:897.87px;font-family:'Liberation Sans',sans-serif;font-size:13.5px;line-height:13.5px;font-weight:400;color:#000;transform-origin:0 0;transform:scaleX(0.9662);">Announcement</div>
<div class="a" style="left:949.86px;top:925.57px;font-family:'Liberation Sans',sans-serif;font-size:13.5px;line-height:13.5px;font-weight:400;color:#000;transform-origin:0 0;transform:scaleX(0.9716);">Tutorial</div>
<svg class="a" style="left:1163px;top:900px" width="10" height="10" viewBox="0 0 10 10"><rect width="10" height="10" fill="#efefef"/><path d="M2.2 2.2 L7.8 7.8 M7.8 2.2 L2.2 7.8" stroke="#9a9a9a" stroke-width="0.9"/></svg>
<svg class="a" style="left:1163px;top:928px" width="10" height="10" viewBox="0 0 10 10"><rect width="10" height="10" fill="#efefef"/><path d="M2.2 2.2 L7.8 7.8 M7.8 2.2 L2.2 7.8" stroke="#9a9a9a" stroke-width="0.9"/></svg>
</body></html>
